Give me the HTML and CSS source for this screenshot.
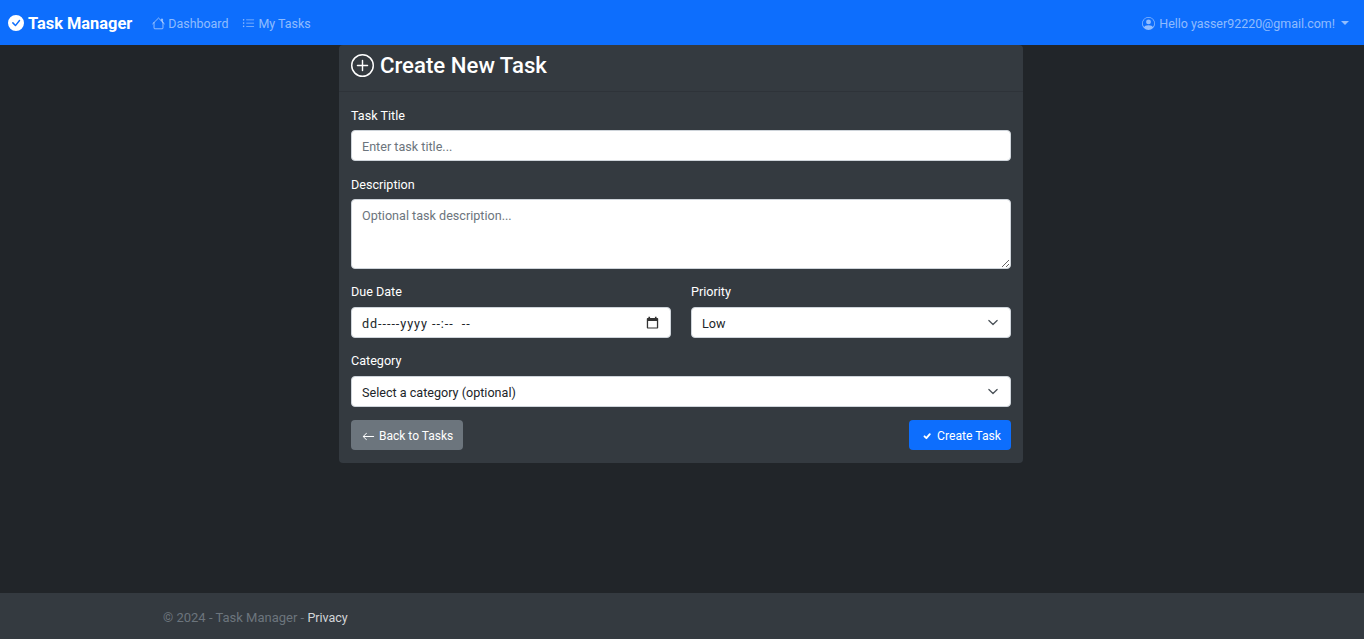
FILE: index.html
```html
<!DOCTYPE html>
<html>
<head>
  <meta charset="UTF-8">
  <title>Create New Task - Task Manager</title>
  <link rel="stylesheet" href="styles.css">
</head>
<body>
  <nav class="navbar">
    <a class="brand" href="#">
      <svg class="brand-icon" viewBox="0 0 16 16" fill="currentColor"><path d="M16 8A8 8 0 1 1 0 8a8 8 0 0 1 16 0zm-3.97-3.03a.75.75 0 0 0-1.08.02L7.47 9.42 5.38 7.33a.75.75 0 0 0-1.06 1.06l2.63 2.64a.75.75 0 0 0 1.08-.02l4.02-5a.75.75 0 0 0-.05-1.04z"/></svg>
      Task Manager
    </a>
    <a class="nav-link nav-first" href="#">
      <svg class="icon" viewBox="0 0 16 16" fill="none" stroke="currentColor" stroke-width="1.2" stroke-linecap="round" stroke-linejoin="round"><path d="M.8 8.4 8 1.3l7.2 7.1M2.5 6.8v6.7a1 1 0 0 0 1 1h9a1 1 0 0 0 1-1V6.8M11.5 4.8V2.5h1.5v3.8"/></svg>
      Dashboard
    </a>
    <a class="nav-link" href="#">
      <svg class="icon" viewBox="0 0 16 16" fill="currentColor"><path fill-rule="evenodd" d="M5 11.5a.5.5 0 0 1 .5-.5h9a.5.5 0 0 1 0 1h-9a.5.5 0 0 1-.5-.5zm0-4a.5.5 0 0 1 .5-.5h9a.5.5 0 0 1 0 1h-9a.5.5 0 0 1-.5-.5zm0-4a.5.5 0 0 1 .5-.5h9a.5.5 0 0 1 0 1h-9a.5.5 0 0 1-.5-.5zm-3 1a1 1 0 1 0 0-2 1 1 0 0 0 0 2zm0 4a1 1 0 1 0 0-2 1 1 0 0 0 0 2zm0 4a1 1 0 1 0 0-2 1 1 0 0 0 0 2z"/></svg>
      My Tasks
    </a>
    <a class="nav-link nav-user" href="#">
      <svg class="icon" viewBox="0 0 16 16" fill="currentColor"><path d="M11 6a3 3 0 1 1-6 0 3 3 0 0 1 6 0z"/><path fill-rule="evenodd" d="M0 8a8 8 0 1 1 16 0A8 8 0 0 1 0 8zm8-7a7 7 0 0 0-5.47 11.37C3.24 11.23 4.55 10 8 10s4.76 1.23 5.47 2.37A7 7 0 0 0 8 1z"/></svg>
      Hello yasser92220@gmail.com!
      <span class="caret"></span>
    </a>
  </nav>

  <main class="content">
    <form class="card">
      <div class="card-header">
        <svg class="title-icon" viewBox="0 0 16 16" fill="currentColor"><path d="M8 15A7 7 0 1 1 8 1a7 7 0 0 1 0 14zm0 1A8 8 0 1 0 8 0a8 8 0 0 0 0 16z"/><path d="M8 4a.5.5 0 0 1 .5.5v3h3a.5.5 0 0 1 0 1h-3v3a.5.5 0 0 1-1 0v-3h-3a.5.5 0 0 1 0-1h3v-3A.5.5 0 0 1 8 4z"/></svg>
        <h1>Create New Task</h1>
      </div>
      <div class="card-body">
        <div class="field">
          <label for="title">Task Title</label>
          <input class="control" type="text" id="title" placeholder="Enter task title...">
        </div>
        <div class="field">
          <label for="description">Description</label>
          <textarea class="control control-area" id="description" placeholder="Optional task description..."></textarea>
        </div>
        <div class="field field-row field-low">
          <div>
            <label for="dueDate">Due Date</label>
            <div class="control date-control" id="dueDate">
              <span class="date-text">dd-----yyyy --:--&nbsp; --</span>
              <svg class="date-icon" viewBox="0 0 16 16" fill="currentColor"><path d="M3 1h2v1.5h6V1h2v1.5h1A1 1 0 0 1 15 3.5v11a1 1 0 0 1-1 1H2a1 1 0 0 1-1-1v-11a1 1 0 0 1 1-1h1V1zM2.6 6v8h10.8V6H2.6z"/></svg>
            </div>
          </div>
          <div>
            <label for="priority">Priority</label>
            <select class="control select-control" id="priority">
              <option>Low</option>
              <option>Medium</option>
              <option>High</option>
            </select>
          </div>
        </div>
        <div class="field field-low">
          <label for="category">Category</label>
          <select class="control select-control" id="category">
            <option>Select a category (optional)</option>
          </select>
        </div>
        <div class="actions">
          <a class="btn btn-secondary" href="#">
            <svg class="btn-icon" viewBox="0 0 16 16" fill="currentColor"><path fill-rule="evenodd" d="M15 8a.5.5 0 0 0-.5-.5H2.7l3.15-3.15a.5.5 0 1 0-.7-.7l-4 4a.5.5 0 0 0 0 .7l4 4a.5.5 0 0 0 .7-.7L2.7 8.5h11.8A.5.5 0 0 0 15 8z"/></svg>
            Back to Tasks
          </a>
          <button class="btn btn-primary" type="submit">
            <svg class="btn-icon btn-check" viewBox="0 0 16 16" fill="none" stroke="currentColor" stroke-width="3" stroke-linecap="round" stroke-linejoin="round"><path d="M4 8.5l3 3L12.5 5"/></svg>
            Create Task
          </button>
        </div>
      </div>
    </form>
  </main>

  <footer class="footer">
    &copy; 2024 - Task Manager - <a href="#">Privacy</a>
  </footer>
</body>
</html>
```

FILE: styles.css
```css
* {
  box-sizing: border-box;
}

body {
  display: flex;
  flex-direction: column;
  min-height: 100vh;
  margin: 0;
  font-family: Roboto, sans-serif;
  font-size: 12.6px;
  line-height: 21px;
  color: #fff;
  background-color: #212529;
}

a {
  text-decoration: none;
}

.navbar {
  display: flex;
  align-items: center;
  height: 45px;
  padding: 1px 15px 0 8px;
  background-color: #0d6efd;
}

.brand {
  display: flex;
  align-items: center;
  gap: 4px;
  font-size: 16.4px;
  font-weight: 700;
  color: #fff;
}

.brand-icon {
  width: 16px;
  height: 16px;
}

.nav-link {
  display: flex;
  align-items: center;
  gap: 3px;
  margin-left: 14px;
  font-size: 12.45px;
  color: rgba(255, 255, 255, 0.55);
}

.nav-first {
  margin-left: 20px;
}

.nav-user {
  margin-left: auto;
  gap: 4px;
}

.icon {
  width: 13px;
  height: 13px;
}

.caret {
  width: 0;
  height: 0;
  margin-left: 2px;
  border-top: 4px solid currentColor;
  border-right: 4px solid transparent;
  border-left: 4px solid transparent;
}

.content {
  flex: 1;
  padding-right: 2px;
}

.card {
  width: 684px;
  margin: 0 auto;
  background-color: #343a40;
  border-radius: 4px;
}

.card-header {
  display: flex;
  align-items: center;
  gap: 6px;
  height: 47px;
  padding: 0 12px 6px;
  border-bottom: 1px solid #2e3339;
}

.title-icon {
  width: 23px;
  height: 23px;
}

h1 {
  margin: 0;
  font-size: 22.2px;
  font-weight: 500;
  line-height: 30px;
}

.card-body {
  padding: 13px 12px;
}

.field {
  margin-bottom: 13px;
}

.field-row {
  display: grid;
  grid-template-columns: 1fr 1fr;
  gap: 20px;
}

label {
  display: block;
  margin-bottom: 4px;
}

.field-low label {
  margin-top: -1px;
  margin-bottom: 5px;
}

.control {
  display: block;
  width: 100%;
  height: 31px;
  padding: 5px 10px 3px;
  font-family: inherit;
  font-size: 12.6px;
  line-height: 21px;
  color: #212529;
  background-color: #fff;
  border: 1px solid #ced4da;
  border-radius: 4px;
}

.control::placeholder {
  color: #6c757d;
}

.control-area {
  height: 70px;
}

.date-control {
  display: flex;
  align-items: center;
  justify-content: space-between;
}

.date-text {
  letter-spacing: 0.95px;
}

.date-icon {
  width: 13px;
  height: 13px;
  margin: -2px 1px 0 0;
  color: #333;
}

.select-control {
  appearance: none;
  background-image: url("data:image/svg+xml,%3csvg xmlns='http://www.w3.org/2000/svg' viewBox='0 0 16 16'%3e%3cpath fill='none' stroke='%23495057' stroke-linecap='round' stroke-linejoin='round' stroke-width='1.8' d='M2 5l6 6 6-6'/%3e%3c/svg%3e");
  background-repeat: no-repeat;
  background-position: right 10px center;
  background-size: 14px 11px;
}

.actions {
  display: flex;
  justify-content: space-between;
}

.btn {
  display: flex;
  align-items: center;
  gap: 4px;
  height: 30px;
  padding: 1px 10px 0 11px;
  font-family: inherit;
  font-size: 12px;
  color: #fff;
  border: none;
  border-radius: 4px;
}

.btn-secondary {
  padding-top: 2px;
  background-color: #6c757d;
}

.btn-primary {
  gap: 5px;
  padding-left: 13px;
  font-size: 12.2px;
  background-color: #0d6efd;
}

.btn-icon {
  width: 13px;
  height: 13px;
}

.btn-check {
  width: 10px;
  height: 10px;
}

.footer {
  height: 46px;
  padding: 14px 0 0 163px;
  font-size: 13px;
  color: #6c757d;
  background-color: #343a40;
}

.footer a {
  font-size: 12.5px;
  color: #d3d6d9;
}
```
